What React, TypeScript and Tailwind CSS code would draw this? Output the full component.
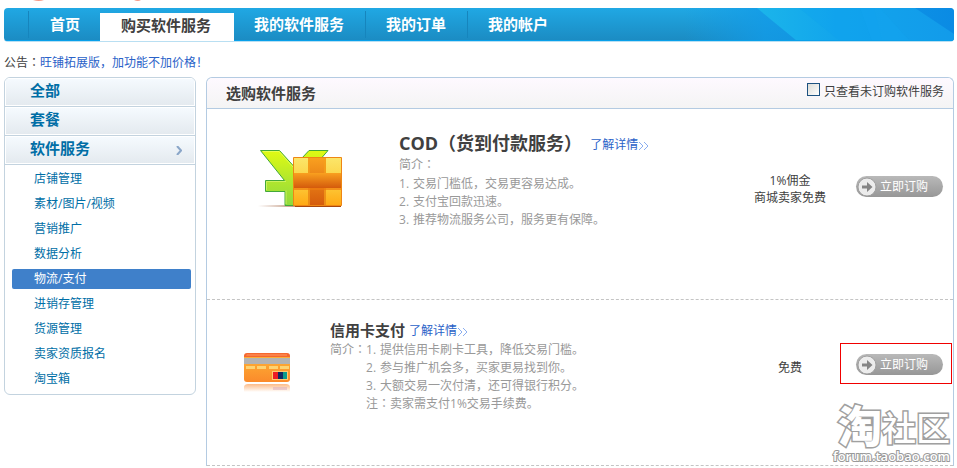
import React from 'react';

interface Service {
  title: string;
  large: boolean;
  note?: string;
  points: string[];
  price: string[];
  highlighted: boolean;
}

const navItems = ['首页', '购买软件服务', '我的软件服务', '我的订单', '我的帐户'];

const categories = ['全部', '套餐', '软件服务'];

const subCategories = [
  '店铺管理',
  '素材/图片/视频',
  '营销推广',
  '数据分析',
  '物流/支付',
  '进销存管理',
  '货源管理',
  '卖家资质报名',
  '淘宝箱',
];

const services: Service[] = [
  {
    title: 'COD（货到付款服务）',
    large: true,
    points: ['交易门槛低，交易更容易达成。', '支付宝回款迅速。', '推荐物流服务公司，服务更有保障。'],
    price: ['1%佣金', '商城卖家免费'],
    highlighted: false,
  },
  {
    title: '信用卡支付',
    large: false,
    points: ['提供信用卡刷卡工具，降低交易门槛。', '参与推广机会多，买家更易找到你。', '大额交易一次付清，还可得银行积分。'],
    note: '卖家需支付1%交易手续费。',
    price: ['免费'],
    highlighted: true,
  },
];

// the TC face centres the full-width colon in its cell
const Colon: React.FC = () => <span className="font-['Noto_Sans_CJK_TC',sans-serif] leading-none">：</span>;

const CodIcon: React.FC = () => (
  <svg className="block h-[62px] w-[90px]" viewBox="0 0 90 62" fill="none">
    <defs>
      <linearGradient id="yen" x1="0" y1="0" x2="0" y2="1">
        <stop offset="0" stopColor="#e0fb12" />
        <stop offset="0.5" stopColor="#b4e82c" />
        <stop offset="1" stopColor="#8fd93c" />
      </linearGradient>
      <linearGradient id="boxFace" x1="0" y1="0" x2="0" y2="1">
        <stop offset="0" stopColor="#fbe66a" />
        <stop offset="0.5" stopColor="#fcd040" />
        <stop offset="1" stopColor="#ffa914" />
      </linearGradient>
      <linearGradient id="ribbon" x1="0" y1="0" x2="0" y2="1">
        <stop offset="0" stopColor="#f9a01f" />
        <stop offset="1" stopColor="#d45a0c" />
      </linearGradient>
      <linearGradient id="floor" x1="0" y1="0" x2="1" y2="0">
        <stop offset="0" stopColor="#8a3a10" stopOpacity="0" />
        <stop offset="1" stopColor="#8a3a10" stopOpacity="0.7" />
      </linearGradient>
    </defs>
    <path d="M2 57h50v2H2z" fill="url(#floor)" />
    <path
      d="M4.500 2.500H23.500L38 18.500 53 2.500h19L50 28v29.500H29V43.500H9.500V32.500H28.500z"
      fill="url(#yen)"
      stroke="#42a83a"
      strokeLinejoin="round"
    />
    <path d="M7 3.500h16L38 20" stroke="#e9ff61" opacity="0.8" />
    <path d="M10.500 42V33.500H30M30 56V42.500" stroke="#d5f46a" opacity="0.8" />
    <path d="M37.500 9.500h48v48h-48z" fill="url(#boxFace)" />
    <path d="M52 10h18v48H52z" fill="url(#ribbon)" />
    <path d="M52 10h2v48h-2zM68 10h2v48h-2z" fill="#f5a01a" opacity="0.7" />
    <path d="M38 25h47v15H38z" fill="url(#ribbon)" />
    <path d="M38 40h47v2H38z" fill="#f07c0e" opacity="0.7" />
    <path d="M37.500 9.500h48v48h-48z" stroke="#ee8614" />
    <path d="M39 58h46v1H39z" fill="#a8470c" />
  </svg>
);

const CardIcon: React.FC = () => (
  <svg className="block h-[40px] w-[46px]" viewBox="0 0 46 40">
    <defs>
      <linearGradient id="card" x1="0" y1="0" x2="0" y2="1">
        <stop offset="0" stopColor="#fdb035" />
        <stop offset="1" stopColor="#fb8a2b" />
      </linearGradient>
      <linearGradient id="mirror" x1="0" y1="0" x2="0" y2="1">
        <stop offset="0" stopColor="#fb9e55" stopOpacity="0.7" />
        <stop offset="1" stopColor="#fb9e55" stopOpacity="0" />
      </linearGradient>
    </defs>
    <path d="M3 0h40a3 3 0 0 1 3 3v4H0V3a3 3 0 0 1 3-3z" fill="#f4672f" />
    <path d="M3 1h40v2H2z" fill="#fa8148" />
    <path d="M0 4h46v22a3 3 0 0 1-3 3H3a3 3 0 0 1-3-3z" fill="url(#card)" />
    <path d="M0 5h46v6H0z" fill="#b3b3b3" />
    <path d="M2 14.500h9M13 14.500h9M25 14.500h9M36 14.500h9" stroke="#fdd373" strokeWidth="3" />
    <path d="M28 18h16v9H28z" fill="#fdc970" />
    <path d="M29 19h5v7h-5z" fill="#ed1c24" />
    <path d="M34 19h5v7h-5z" fill="#122a63" />
    <path d="M39 19h4v7h-4z" fill="#0a9c8c" />
    <path d="M0 34c0-2 2-3 4-3h38c2 0 4 1 4 3v5H0z" fill="url(#mirror)" />
    <path d="M29 34h14v3H29z" fill="#d9a9bc" opacity="0.5" />
  </svg>
);

const OrderButton: React.FC = () => (
  <button
    type="button"
    className="flex h-[21px] w-[87px] items-center gap-[3px] rounded-full bg-gradient-to-b from-[#b9b9b9] to-[#979797] pl-px text-[12px] leading-5 text-white"
  >
    <svg className="h-5 w-5 shrink-0" viewBox="0 0 20 20">
      <circle cx="10" cy="10" r="9" fill="#ececec" stroke="#a0a0a0" />
      <path d="M5 8.500h5V5l5.500 5-5.500 5v-3.500H5z" fill="#858585" />
    </svg>
    <span className="whitespace-nowrap">立即订购</span>
  </button>
);

const NavBar: React.FC = () => (
  <nav className="relative flex h-[34px] overflow-hidden rounded-[4px] border-b border-[#b9dff2] bg-gradient-to-b from-[#20a8e4] to-[#1b8bc2] pl-6">
    <svg className="absolute right-0 top-0 h-full w-[270px]" viewBox="0 0 270 33" preserveAspectRatio="none">
      <defs>
        <linearGradient id="navRight" x1="0" y1="0" x2="1" y2="0">
          <stop offset="0" stopColor="#129be8" stopOpacity="0" />
          <stop offset="0.3" stopColor="#129be8" stopOpacity="0.8" />
          <stop offset="1" stopColor="#0a8be4" />
        </linearGradient>
        <linearGradient id="navBeam" x1="0" y1="0" x2="1" y2="0">
          <stop offset="0" stopColor="#1bb5ea" />
          <stop offset="0.4" stopColor="#12a5ec" />
          <stop offset="1" stopColor="#129bea" />
        </linearGradient>
      </defs>
      <path d="M0 0h270v33H0z" fill="url(#navRight)" />
      <path d="M73 0h158l39 26v7H113z" fill="url(#navBeam)" />
      <path d="M115 0h75l8 33h-42z" fill="#0ba0ee" opacity="0.25" />
      <path d="M176 0h20l30 33h-38z" fill="#15a9f2" opacity="0.25" />
    </svg>
    <span className="absolute inset-x-0 bottom-0 h-px bg-[#08a0ea]" />
    <ul className="relative flex text-[15px] font-bold leading-8 text-white">
      {navItems.map((item, i) => (
        <li key={item} className="flex">
          {i === 1 ? (
            <a href="#" className="mt-[5px] bg-white pl-[21px] pr-[23px] leading-6 text-[#404040]">{item}</a>
          ) : (
            <>
              {i !== 2 && <span className="my-[3px] w-px bg-[#1685bd]" />}
              <a href="#" className={i === 0 ? 'pl-[21px] pr-5' : 'pl-5 pr-[21px]'}>{item}</a>
            </>
          )}
        </li>
      ))}
    </ul>
  </nav>
);

const Sidebar: React.FC = () => (
  <aside className="w-[192px] shrink-0 overflow-hidden rounded-md border border-[#c3d3df] bg-white">
    <ul>
      {categories.map((name, i) => (
        <li key={name} className="border-b border-[#c3d3df]">
          <a
            href="#"
            className="flex h-7 items-center justify-between border border-white bg-gradient-to-b from-[#f5fafe] to-[#e4eaef] pb-1 pl-6 pr-3 text-[15px] font-bold leading-[22px] text-[#006ea6]"
          >
            {name}
            {i === 2 && (
              <svg className="mt-1 h-[9px] w-[6px]" viewBox="0 0 6 9" fill="none" stroke="#8aa6c8" strokeWidth="2">
                <path d="M1 0l4 4.500-4 4.500" />
              </svg>
            )}
          </a>
        </li>
      ))}
    </ul>
    <ul className="pb-1 pl-[7px] pr-1 text-[12px] leading-5">
      {subCategories.map((name) => (
        <li key={name} className="pb-px pt-1">
          <a
            href="#"
            className={
              name === '物流/支付'
                ? 'block rounded-xs bg-[#3f80ca] pl-[22px] text-white'
                : 'block pl-[22px] text-[#006ea6]'
            }
          >
            {name}
          </a>
        </li>
      ))}
    </ul>
  </aside>
);

const DetailLink: React.FC = () => (
  <a href="#" className="flex items-center text-[12px] leading-[18px] text-[#2a62c8]">
    了解详情
    <svg className="mt-0.5 h-2 w-[11px]" viewBox="0 0 11 8" fill="none" stroke="#8aaef0">
      <path d="M1 0l4 4-4 4M6 0l4 4-4 4" />
    </svg>
  </a>
);

const Points: React.FC<{ service: Service }> = ({ service }) => (
  <div>
    <ol>
      {service.points.map((point, i) => (
        <li key={point} className="flex">
          <span className="w-[14px] shrink-0">{i + 1}.</span>
          {point}
        </li>
      ))}
    </ol>
    {service.note && <p>注<Colon />{service.note}</p>}
  </div>
);

const ServiceRow: React.FC<{ service: Service }> = ({ service }) => (
  <li
    className={
      service.large
        ? 'flex min-h-[191px] items-start border-b border-dashed border-[#c4c4c4]'
        : 'flex min-h-[166px] items-start border-b border-dashed border-[#c4c4c4]'
    }
  >
    <div className={service.large ? 'w-[192px] shrink-0 pl-[49px] pt-[39px]' : 'w-[123px] shrink-0 pl-[37px] pt-[53px]'}>
      {service.large ? <CodIcon /> : <CardIcon />}
    </div>
    <div className="flex-1 text-[12px] leading-[18px] text-[#999]">
      {service.large ? (
        <>
          <div className="flex items-end gap-2 pt-[21px]">
            <h3 className="text-[18px] font-bold leading-[26px] text-[#404040]">{service.title}</h3>
            <div className="pb-0.5">
              <DetailLink />
            </div>
          </div>
          <p>简介<Colon /></p>
          <div className="pt-px">
            <Points service={service} />
          </div>
        </>
      ) : (
        <>
          <div className="flex items-end gap-1 pt-5">
            <h3 className="text-[15px] font-bold leading-5 text-[#404040]">{service.title}</h3>
            <DetailLink />
          </div>
          <div className="flex pt-px">
            <p className="shrink-0">简介<Colon /></p>
            <Points service={service} />
          </div>
        </>
      )}
    </div>
    <div className={service.large ? 'w-[100px] shrink-0 pt-[63px]' : 'w-[100px] shrink-0 pt-[59px]'}>
      {service.price.map((line) => (
        <p key={line} className="text-center text-[12px] leading-[17px] text-[#404040]">{line}</p>
      ))}
    </div>
    <div
      className={
        service.highlighted
          ? 'mr-px mt-[43px] shrink-0 border border-[#f00000] pb-[8px] pl-[15px] pr-2 pt-[10px]'
          : 'mr-px mt-[56px] shrink-0 border border-transparent pb-[8px] pl-[15px] pr-2 pt-[10px]'
      }
    >
      <OrderButton />
    </div>
  </li>
);

const Watermark: React.FC = () => (
  <div className="absolute bottom-[2px] right-[3px] flex flex-col items-end text-white [paint-order:stroke_fill]">
    <div className="flex items-end pb-[3px] font-bold [-webkit-text-stroke:3px_#a0a0a0]">
      <span className="text-[44px] font-black leading-[38px]">淘</span>
      <span className="text-[34px] font-medium leading-[34px]">社区</span>
    </div>
    <p className="text-[13px] font-semibold leading-[16px] [-webkit-text-stroke:2px_#999]">forum.taobao.com</p>
  </div>
);

export default function App() {
  return (
    <div className="bg-white pl-1 pr-[3px] font-['Open_Sans','Noto_Sans_CJK_SC',sans-serif]">
      <svg className="block h-2 w-[150px]" viewBox="0 0 150 8" fill="#f79a86">
        <path d="M29 0h11q-5 2-11 0zM130 0h7q-3 2-7 0z" />
      </svg>
      <NavBar />
      <p className="pb-[5px] pt-3 text-[12px] leading-[18px] text-[#404040]">
        公告<Colon /><a href="#" className="text-[#2a62c8]">旺铺拓展版，加功能不加价格！</a>
      </p>
      <div className="flex items-start gap-[10px]">
        <Sidebar />
        <main className="relative flex-1 rounded-t-md border-x border-t border-[#b4cbe2]">
          <div className="flex h-[31px] items-center justify-between rounded-t-md border-b border-[#b4cbe2] bg-gradient-to-b from-[#fef9ff] to-[#f4f4f4] pl-[19px] pr-[9px]">
            <h2 className="text-[15px] font-bold leading-6 text-[#404040]">选购软件服务</h2>
            <label className="flex items-center gap-1 pb-[3px] text-[12px] leading-5 text-[#404040]">
              <input
                type="checkbox"
                className="mb-1 h-[13px] w-[13px] appearance-none border border-[#1d5281] bg-gradient-to-br from-[#dcdcd7] to-white"
              />
              只查看未订购软件服务
            </label>
          </div>
          <ul>
            {services.map((service) => (
              <ServiceRow key={service.title} service={service} />
            ))}
          </ul>
          <Watermark />
        </main>
      </div>
    </div>
  );
}
